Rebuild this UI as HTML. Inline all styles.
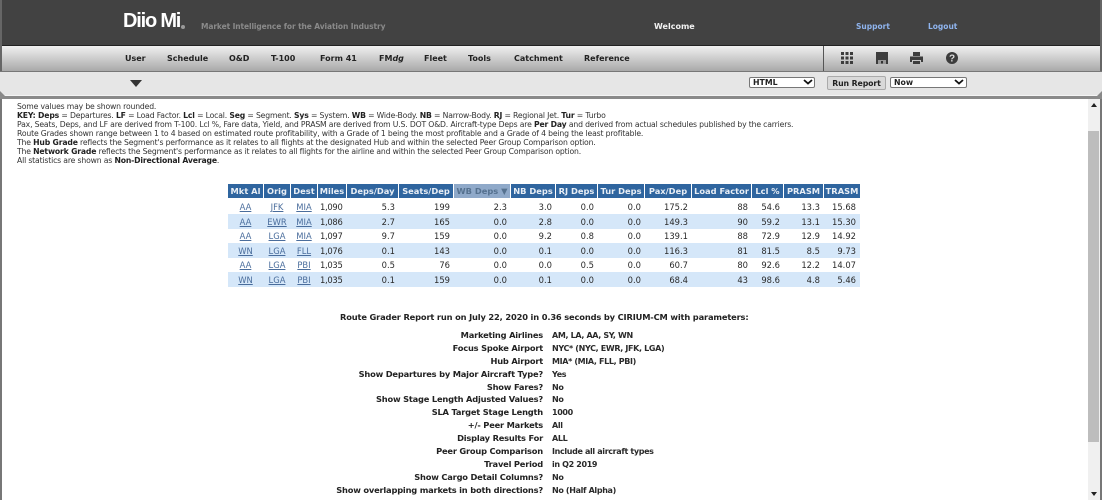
<!DOCTYPE html>
<html><head><meta charset="utf-8"><style>
html,body{margin:0;padding:0;width:1102px;height:500px;overflow:hidden;background:#fff;font-family:"DejaVu Sans","Liberation Sans",sans-serif;font-size:8.5px;color:#222}
div,span,a{position:absolute;white-space:nowrap}
.nav{top:53px;font-weight:bold;color:#222;font-size:8px;line-height:11px}
.l{left:17px;font-size:7.7px;letter-spacing:-.16px;line-height:10px;color:#333}
.l b{color:#222}
.h{top:184px;height:14px;background:#2f659f;color:#e8eef5;font-weight:bold;text-align:center;line-height:14px;font-size:8.3px}
.r{left:228px;width:632px;height:14.5px;}
.c{font-size:8.4px;line-height:14px;color:#2a2a2a;text-align:right}
.u{text-decoration:underline;color:#4a6d9c;text-align:center}
.k{font-weight:bold;text-align:right;right:559px;font-size:8.3px;letter-spacing:-.2px;line-height:11px;color:#222}
.v{left:552px;font-weight:bold;font-size:8px;letter-spacing:-.35px;line-height:11px;color:#2a2a2a}
</style></head><body>
<div style="left:0;top:0;width:1102px;height:46px;background:#424242;border-bottom:1px solid #222;box-sizing:border-box"></div>
<div style="left:0;top:0;width:2px;height:72px;background:#666"></div>
<div style="left:1100px;top:0;width:2px;height:72px;background:#666"></div>
<div style="left:123px;top:9px;font-family:'Liberation Sans',sans-serif;font-size:20px;line-height:25px;font-weight:bold;color:#fff;letter-spacing:-1.2px">Diio Mi</div>
<div style="left:181px;top:25px;width:4px;height:4px;border-radius:50%;background:#999"></div>
<div style="left:201px;top:21px;font-size:7.5px;letter-spacing:-.1px;line-height:11px;font-weight:bold;color:#8a8a8a">Market Intelligence for the Aviation Industry</div>
<div style="left:654px;top:21px;font-size:8px;line-height:11px;font-weight:bold;color:#f2f2f2">Welcome</div>
<div style="left:856px;top:21px;font-size:7.5px;line-height:11px;font-weight:bold;color:#8fb4ee">Support</div>
<div style="left:928px;top:21px;font-size:7.5px;line-height:11px;font-weight:bold;color:#8fb4ee">Logout</div>

<div style="left:2px;top:46px;width:1098px;height:25px;background:linear-gradient(#f0f0f0,#a9a9a9)"></div>
<div style="left:0;top:71px;width:1102px;height:1px;background:#777"></div>
<div class="nav" style="left:125px">User</div>
<div class="nav" style="left:167px">Schedule</div>
<div class="nav" style="left:229px">O&amp;D</div>
<div class="nav" style="left:271px">T-100</div>
<div class="nav" style="left:320px">Form 41</div>
<div class="nav" style="left:379px">FM<i>dg</i></div>
<div class="nav" style="left:424px">Fleet</div>
<div class="nav" style="left:468px">Tools</div>
<div class="nav" style="left:514px">Catchment</div>
<div class="nav" style="left:584px">Reference</div>
<div style="left:823px;top:46px;width:1px;height:25px;background:#555"></div>
<svg style="position:absolute;left:841px;top:50px" width="125" height="16" viewBox="0 0 125 16">
<g fill="#3c3c3c"><rect x="0" y="2" width="3" height="3"/><rect x="4.500" y="2" width="3" height="3"/><rect x="9" y="2" width="3" height="3"/><rect x="0" y="6.500" width="3" height="3"/><rect x="4.500" y="6.500" width="3" height="3"/><rect x="9" y="6.500" width="3" height="3"/><rect x="0" y="11" width="3" height="3"/><rect x="4.500" y="11" width="3" height="3"/><rect x="9" y="11" width="3" height="3"/>
<path d="M35 2h12v12H35z"/><path fill="#999" d="M37 10h8v4h-8z"/><rect x="40" y="11" width="2" height="2.500" fill="#333"/>
<path d="M72 2h7v4h-7zM69 6.500h13v5.500h-2V10h-9v2h-2zM72 11h7v3h-7z"/>
<circle cx="111" cy="8" r="6"/></g>
<text x="111" y="11.500" text-anchor="middle" font-family="Liberation Sans" font-size="10" font-weight="bold" fill="#ddd">?</text>
</svg>

<div style="left:0;top:72px;width:1102px;height:25px;background:#e6e6e6"></div>
<div style="left:0;top:96px;width:1102px;height:3px;background:#8a8a8a"></div>
<div style="left:0;top:95px;width:1102px;height:1px;background:#f4f4f4"></div>
<svg style="position:absolute;left:0;top:91px" width="6" height="6"><path d="M0 0l5 5H0z" fill="#888"/></svg>
<svg style="position:absolute;left:1096px;top:91px" width="6" height="6"><path d="M6 0L1 5h5z" fill="#888"/></svg>
<svg style="position:absolute;left:129px;top:79px" width="14" height="9"><path d="M1 1h12L7 8z" fill="#333"/></svg>

<div style="left:749px;top:77px;width:66px;height:11px;box-sizing:border-box;background:#fff;border:1px solid #777;border-radius:2px;font-weight:bold;font-size:7.8px;line-height:10px;padding-left:3px;color:#222">HTML</div>
<svg style="position:absolute;left:803px;top:79px" width="10" height="7"><path d="M1 1l4 3.500L9 1" stroke="#111" stroke-width="1.800" fill="none"/></svg>
<div style="left:827px;top:76px;width:59px;height:14px;box-sizing:border-box;background:#d9d9d9;border:1px solid #aaa;border-radius:2px;font-weight:bold;font-size:7.8px;letter-spacing:-.1px;line-height:14px;text-align:center;color:#222">Run Report</div>
<div style="left:890px;top:77px;width:77px;height:11px;box-sizing:border-box;background:#fff;border:1px solid #777;border-radius:2px;font-weight:bold;font-size:7.8px;line-height:10px;padding-left:3px;color:#222">Now</div>
<svg style="position:absolute;left:954px;top:79px" width="10" height="7"><path d="M1 1l4 3.500L9 1" stroke="#111" stroke-width="1.800" fill="none"/></svg>

<div style="left:0;top:99px;width:2px;height:401px;background:#777"></div>
<div style="left:1100px;top:99px;width:2px;height:401px;background:#777"></div>
<div style="left:1088px;top:99px;width:12px;height:401px;background:#f0f0f0"></div>
<div style="left:1088px;top:131px;width:11px;height:311px;background:#bdbdbd"></div>
<svg style="position:absolute;left:1090px;top:102px" width="8" height="6"><path d="M1 5h6L4 1z" fill="#222"/></svg>
<svg style="position:absolute;left:1090px;top:491px" width="8" height="6"><path d="M1 1h6L4 5z" fill="#222"/></svg>

<div class="l" style="top:102px">Some values may be shown rounded.</div>
<div class="l" style="top:111px"><b>KEY: Deps</b> = Departures. <b>LF</b> = Load Factor. <b>Lcl</b> = Local. <b>Seg</b> = Segment. <b>Sys</b> = System. <b>WB</b> = Wide-Body. <b>NB</b> = Narrow-Body. <b>RJ</b> = Regional Jet. <b>Tur</b> = Turbo</div>
<div class="l" style="top:120px">Pax, Seats, Deps, and LF are derived from T-100. Lcl %, Fare data, Yield, and PRASM are derived from U.S. DOT O&amp;D. Aircraft-type Deps are <b>Per Day</b> and derived from actual schedules published by the carriers.</div>
<div class="l" style="top:129px">Route Grades shown range between 1 to 4 based on estimated route profitability, with a Grade of 1 being the most profitable and a Grade of 4 being the least profitable.</div>
<div class="l" style="top:138px">The <b>Hub Grade</b> reflects the Segment's performance as it relates to all flights at the designated Hub and within the selected Peer Group Comparison option.</div>
<div class="l" style="top:147px">The <b>Network Grade</b> reflects the Segment's performance as it relates to all flights for the airline and within the selected Peer Group Comparison option.</div>
<div class="l" style="top:156px">All statistics are shown as <b>Non-Directional Average</b>.</div>

<div class="h" style="left:228px;width:35px">Mkt Al</div>
<div class="h" style="left:264px;width:26px">Orig</div>
<div class="h" style="left:291px;width:26px">Dest</div>
<div class="h" style="left:318px;width:28px">Miles</div>
<div class="h" style="left:347px;width:51px">Deps/Day</div>
<div class="h" style="left:399px;width:54px">Seats/Dep</div>
<div class="h" style="left:454px;width:56px;background:#8fa9c9;color:#55718f">WB Deps &#9660;</div>
<div class="h" style="left:511px;width:44px">NB Deps</div>
<div class="h" style="left:556px;width:41px">RJ Deps</div>
<div class="h" style="left:598px;width:46px">Tur Deps</div>
<div class="h" style="left:645px;width:46px">Pax/Dep</div>
<div class="h" style="left:692px;width:59px">Load Factor</div>
<div class="h" style="left:752px;width:31px">Lcl %</div>
<div class="h" style="left:784px;width:39px">PRASM</div>
<div class="h" style="left:824px;width:36px">TRASM</div>
<div class="r" style="top:214px;background:#d5e7f9"></div>
<div class="r" style="top:243px;background:#d5e7f9"></div>
<div class="r" style="top:272px;background:#d5e7f9"></div>
<script>
var d=[["AA","JFK","MIA","1,090","5.3","199","2.3","3.0","0.0","0.0","175.2","88","54.6","13.3","15.68"],["AA","EWR","MIA","1,086","2.7","165","0.0","2.8","0.0","0.0","149.3","90","59.2","13.1","15.30"],["AA","LGA","MIA","1,097","9.7","159","0.0","9.2","0.8","0.0","139.1","88","72.9","12.9","14.92"],["WN","LGA","FLL","1,076","0.1","143","0.0","0.1","0.0","0.0","116.3","81","81.5","8.5","9.73"],["AA","LGA","PBI","1,035","0.5","76","0.0","0.0","0.5","0.0","60.7","80","92.6","12.2","14.07"],["WN","LGA","PBI","1,035","0.1","159","0.0","0.1","0.0","0.0","68.4","43","98.6","4.8","5.46"]];
var x=[[228,35],[264,26],[291,26],[318,28],[347,48],[399,51],[454,53],[511,41],[556,38],[598,43],[645,43],[692,56],[752,28],[784,36],[824,32]],h="";
d.forEach(function(r,i){r.forEach(function(t,j){var s="left:"+x[j][0]+"px;width:"+x[j][1]+"px;top:"+(200+i*14.5)+"px";h+='<div class="c'+(j<3?' u':'')+'" style="'+s+(j==3?';text-align:left;padding-left:2px;box-sizing:border-box;letter-spacing:-.3px':'')+'">'+t+'</div>'})});
document.write(h);
</script>

<div style="left:340px;top:312px;font-size:8.3px;letter-spacing:-.16px;line-height:11px;font-weight:bold;color:#222">Route Grader Report run on July 22, 2020 in 0.36 seconds by CIRIUM-CM with parameters:</div>
<div class="k" style="top:330px">Marketing Airlines</div><div class="v" style="top:330px">AM, LA, AA, SY, WN</div>
<div class="k" style="top:343px">Focus Spoke Airport</div><div class="v" style="top:343px">NYC* (NYC, EWR, JFK, LGA)</div>
<div class="k" style="top:356px">Hub Airport</div><div class="v" style="top:356px">MIA* (MIA, FLL, PBI)</div>
<div class="k" style="top:369px">Show Departures by Major Aircraft Type?</div><div class="v" style="top:369px">Yes</div>
<div class="k" style="top:382px">Show Fares?</div><div class="v" style="top:382px">No</div>
<div class="k" style="top:394px">Show Stage Length Adjusted Values?</div><div class="v" style="top:394px">No</div>
<div class="k" style="top:407px">SLA Target Stage Length</div><div class="v" style="top:407px">1000</div>
<div class="k" style="top:420px">+/- Peer Markets</div><div class="v" style="top:420px">All</div>
<div class="k" style="top:433px">Display Results For</div><div class="v" style="top:433px">ALL</div>
<div class="k" style="top:446px">Peer Group Comparison</div><div class="v" style="top:446px">Include all aircraft types</div>
<div class="k" style="top:459px">Travel Period</div><div class="v" style="top:459px">in Q2 2019</div>
<div class="k" style="top:472px">Show Cargo Detail Columns?</div><div class="v" style="top:472px">No</div>
<div class="k" style="top:485px">Show overlapping markets in both directions?</div><div class="v" style="top:485px">No (Half Alpha)</div>
</body></html>
